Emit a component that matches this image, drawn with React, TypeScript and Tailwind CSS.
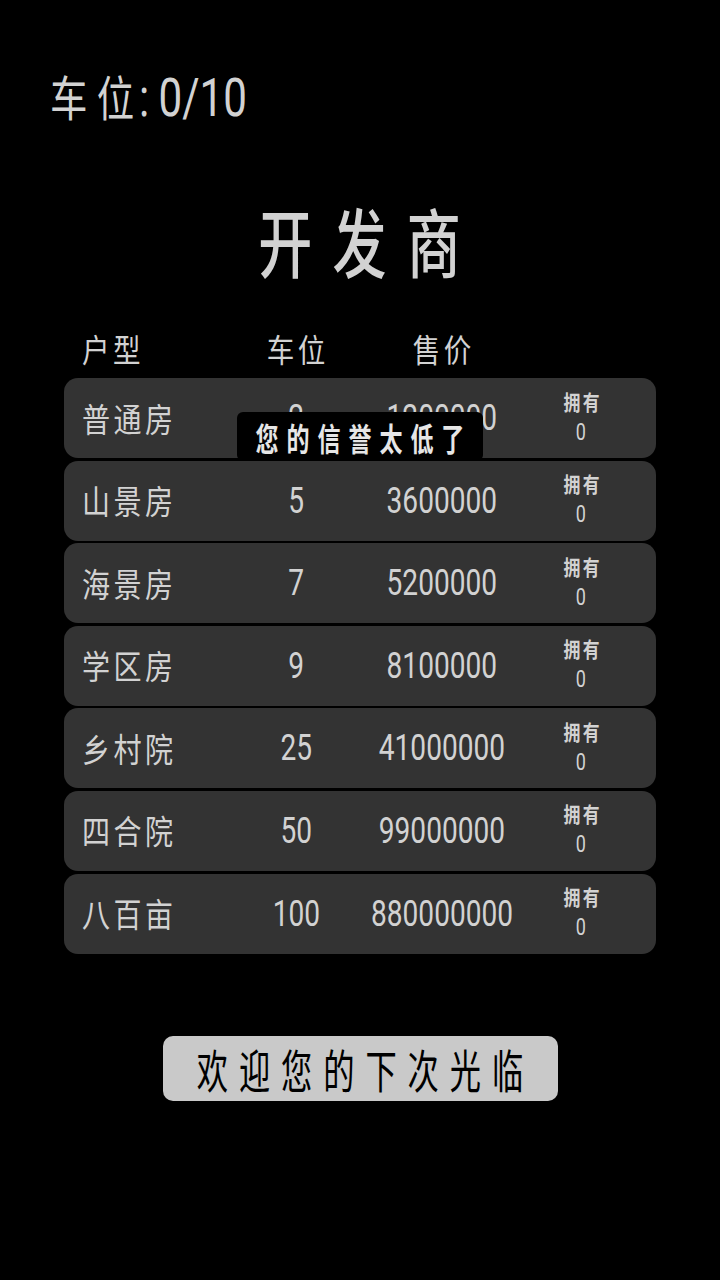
import React from 'react';

type House = { name: string; park: string; price: string; owned: number };

const houses: House[] = [
  { name: '普通房', park: '2', price: '1200000', owned: 0 },
  { name: '山景房', park: '5', price: '3600000', owned: 0 },
  { name: '海景房', park: '7', price: '5200000', owned: 0 },
  { name: '学区房', park: '9', price: '8100000', owned: 0 },
  { name: '乡村院', park: '25', price: '41000000', owned: 0 },
  { name: '四合院', park: '50', price: '99000000', owned: 0 },
  { name: '八百亩', park: '100', price: '880000000', owned: 0 },
];

const cjk = "font-['Noto_Sans_CJK_SC',sans-serif]";
const num = "font-['Roboto','Noto_Sans_CJK_SC',sans-serif]";

export default function App() {
  return (
    <div className={`w-[720px] min-h-[1280px] bg-black text-[#d2d2d2] ${cjk} flex flex-col`}>
      {/* parking slots */}
      <div className="h-[54px] mt-[71px] pl-[50px] flex items-center">
        <span className="inline-block origin-left scale-x-[0.78] whitespace-nowrap leading-none">
          <span className="text-[48px] tracking-[12px]">车</span>
          <span className="text-[48px]">位</span>
          <span className={`${num} text-[54px] ml-[6px] mr-[12px]`}>:</span>
          <span className={`${num} text-[54px]`}>0/10</span>
        </span>
      </div>

      {/* title */}
      <div className="h-[80px] mt-[74px] flex items-center justify-center">
        <span className="inline-block origin-center scale-x-[0.72] text-[75px] font-medium leading-none tracking-[28px] pl-[28px] whitespace-nowrap">
          开发商
        </span>
      </div>

      <div className="w-[592px] ml-[64px] mt-[53px]">
        {/* header */}
        <div className="h-[30px] pl-[18px] grid grid-cols-[178px_72px_220px_58px] items-center text-[32px] leading-none">
          <span className="inline-block origin-left scale-x-[0.86] tracking-[4px] whitespace-nowrap">户型</span>
          <span className="flex justify-center whitespace-nowrap">
            <span className="inline-block origin-center scale-x-[0.86] tracking-[4px] pl-[4px]">车位</span>
          </span>
          <span className="flex justify-center whitespace-nowrap">
            <span className="inline-block origin-center scale-x-[0.86] tracking-[4px] pl-[4px]">售价</span>
          </span>
          <span />
        </div>

        {/* rows */}
        <div className="relative mt-[16px] flex flex-col gap-[2.6px]">
          {houses.map((h) => (
            <div
              key={h.name}
              className="h-[80px] rounded-[14px] bg-[#333333] pl-[18px] grid grid-cols-[178px_72px_220px_58px] items-center"
            >
              <span className="inline-block origin-left scale-x-[0.85] text-[33px] leading-none tracking-[4px] whitespace-nowrap">
                {h.name}
              </span>
              <span className="flex justify-center">
                <span className={`inline-block origin-center scale-x-[0.78] ${num} text-[36px] leading-none`}>{h.park}</span>
              </span>
              <span className="flex justify-center">
                <span className={`inline-block origin-center scale-x-[0.78] ${num} text-[36px] leading-none whitespace-nowrap`}>
                  {h.price}
                </span>
              </span>
              <span className="flex flex-col items-center -mt-[2px]">
                <span className="inline-block origin-center scale-x-[0.8] text-[21px] font-bold leading-none tracking-[3px] pl-[3px] whitespace-nowrap">
                  拥有
                </span>
                <span className={`inline-block origin-center scale-x-[0.75] ${num} text-[24px] leading-none mt-[8px]`}>{h.owned}</span>
              </span>
            </div>
          ))}

          {/* toast */}
          <div className="absolute left-[173px] top-[34px] w-[246px] h-[49px] rounded-[6px] bg-black flex items-center justify-center">
            <span className="inline-block origin-center scale-x-[0.72] text-[32px] font-bold text-[#e6e6e6] leading-none tracking-[11px] pl-[11px] whitespace-nowrap">
              您的信誉太低了
            </span>
          </div>
        </div>
      </div>

      {/* leave button */}
      <div className="mt-[82px] flex justify-center">
        <button className="w-[395px] h-[65px] rounded-[10px] bg-[#c9c9c9] flex items-center justify-center">
          <span className="inline-block origin-center scale-x-[0.68] text-[46px] text-black leading-none tracking-[16px] pl-[16px] whitespace-nowrap">
            欢迎您的下次光临
          </span>
        </button>
      </div>
    </div>
  );
}
